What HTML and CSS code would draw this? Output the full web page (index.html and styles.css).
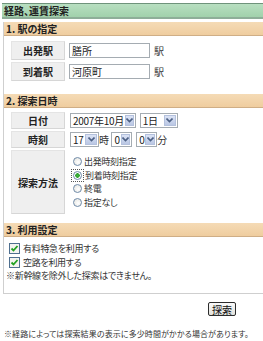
FILE: index.html
```html
<!DOCTYPE html>
<html lang="ja">
<head>
<meta charset="UTF-8">
<title>経路、運賃探索</title>
<link rel="stylesheet" href="styles.css">
</head>
<body>

<div class="title">経路、運賃探索</div>

<div class="panel">
    <div class="sec-head">1. 駅の指定</div>
    <table class="form-tbl tbl-station">
        <tr>
            <th>出発駅</th>
            <td><input type="text" class="txt" value="膳所"><span class="unit">駅</span></td>
        </tr>
        <tr>
            <th>到着駅</th>
            <td><input type="text" class="txt" value="河原町"><span class="unit">駅</span></td>
        </tr>
    </table>

    <div class="sec-head">2. 探索日時</div>
    <table class="form-tbl tbl-date">
        <tr class="row-s">
            <th>日付</th>
            <td>
                <span class="sel sel-ym"><span class="sel-val">2007年10月</span><span class="sel-btn"><svg width="7" height="5" viewBox="0 0 7 5"><path d="M0.5 0.5 L3.5 3.5 L6.5 0.5" fill="none" stroke="#4d6185" stroke-width="1.6"/></svg></span></span>
                <span class="sel sel-day"><span class="sel-val">1日</span><span class="sel-btn"><svg width="7" height="5" viewBox="0 0 7 5"><path d="M0.5 0.5 L3.5 3.5 L6.5 0.5" fill="none" stroke="#4d6185" stroke-width="1.6"/></svg></span></span>
            </td>
        </tr>
        <tr class="row-s">
            <th>時刻</th>
            <td>
                <span class="sel sel-hour"><span class="sel-val">17</span><span class="sel-btn"><svg width="7" height="5" viewBox="0 0 7 5"><path d="M0.5 0.5 L3.5 3.5 L6.5 0.5" fill="none" stroke="#4d6185" stroke-width="1.6"/></svg></span></span><span class="unit-t">時</span>
                <span class="sel sel-min"><span class="sel-val">0</span><span class="sel-btn"><svg width="7" height="5" viewBox="0 0 7 5"><path d="M0.5 0.5 L3.5 3.5 L6.5 0.5" fill="none" stroke="#4d6185" stroke-width="1.6"/></svg></span></span>
                <span class="sel sel-min2"><span class="sel-val">0</span><span class="sel-btn"><svg width="7" height="5" viewBox="0 0 7 5"><path d="M0.5 0.5 L3.5 3.5 L6.5 0.5" fill="none" stroke="#4d6185" stroke-width="1.6"/></svg></span></span><span class="unit-t">分</span>
            </td>
        </tr>
        <tr class="row-l">
            <th>探索方法</th>
            <td class="radios">
                <div class="radio-row"><span class="radio"></span>出発時刻指定</div>
                <div class="radio-row"><span class="focus"><span class="radio on"></span></span>到着時刻指定</div>
                <div class="radio-row"><span class="radio"></span>終電</div>
                <div class="radio-row"><span class="radio"></span>指定なし</div>
            </td>
        </tr>
    </table>

    <div class="sec-head">3. 利用設定</div>
    <div class="opts">
        <div class="chk-row"><span class="chk"><svg width="9" height="9" viewBox="0 0 9 9"><path d="M1.5 4.5 L3.5 6.5 L7.5 2" fill="none" stroke="#21a121" stroke-width="1.8"/></svg></span>有料特急を利用する</div>
        <div class="chk-row"><span class="chk"><svg width="9" height="9" viewBox="0 0 9 9"><path d="M1.5 4.5 L3.5 6.5 L7.5 2" fill="none" stroke="#21a121" stroke-width="1.8"/></svg></span>空路を利用する</div>
        <div class="note">※新幹線を除外した探索はできません。</div>
    </div>
</div>

<div class="actions"><button type="button" class="btn">探索</button></div>

<p class="foot">※経路によっては探索結果の表示に多少時間がかかる場合があります。</p>

</body>
</html>
```

FILE: styles.css
```css
body {
    margin: 0;
    font-family: "Noto Sans CJK JP", sans-serif;
    font-size: 9px;
    letter-spacing: -0.3px;
    color: #333;
    font-feature-settings: "palt";
    background: #fff;
}

.title {
    margin: 3px 0 0 2px;
    height: 13px;
    line-height: 13px;
    padding-left: 2px;
    background: linear-gradient(#b8dfc1, #a1d1ab);
    border-top: 1px solid #6f937b;
    border-bottom: 2px solid #8eae98;
    font-size: 10px;
    font-weight: bold;
    letter-spacing: 0;
    color: #222;
}

.panel {
    margin: 3px 0 0 3px;
    border-left: 1px solid #cfcfcf;
    border-bottom: 1px solid #cfcfcf;
}

.sec-head {
    height: 13px;
    line-height: 13px;
    padding-left: 2px;
    background: linear-gradient(#f5dbb6, #efcd9f);
    border-bottom: 1px solid #cfae86;
    font-size: 10px;
    font-weight: bold;
    letter-spacing: 0;
    color: #222;
}

.form-tbl {
    border-collapse: separate;
    border-spacing: 2px;
    margin-left: 5px;
}

.form-tbl th {
    width: 52px;
    padding: 0;
    background: #efefef;
    border: 1px solid #d6d6d6;
    border-top-color: #e4e4e4;
    border-left-color: #e4e4e4;
    font-size: 10px;
    font-weight: bold;
    letter-spacing: 0;
    color: #222;
    text-align: center;
}

.form-tbl td {
    padding: 0 0 0 2px;
    white-space: nowrap;
}

.tbl-station {
    margin-top: 3px;
    margin-bottom: 11px;
}

.tbl-station tr {
    height: 19px;
}

.txt {
    box-sizing: border-box;
    width: 81px;
    height: 15px;
    padding: 0 2px;
    border: 1px solid #a5acb2;
    font-family: inherit;
    font-size: 10px;
    color: #222;
    vertical-align: middle;
}

.unit {
    margin-left: 4px;
    vertical-align: middle;
    font-size: 10px;
}

.tbl-date {
    margin-top: 2px;
    margin-bottom: 7px;
}

.row-s {
    height: 17px;
}

.row-l {
    height: 64px;
}

.sel {
    box-sizing: border-box;
    display: inline-flex;
    align-items: stretch;
    height: 15px;
    border: 1px solid #a5acb2;
    background: #fff;
    vertical-align: middle;
}

.sel-val {
    flex: 1;
    padding-left: 2px;
    line-height: 13px;
    font-size: 10px;
    color: #222;
}

.sel-btn {
    display: flex;
    align-items: center;
    justify-content: center;
    width: 12px;
    margin: 1px;
    background: linear-gradient(#dbe3f5, #bac7e4);
    border: 1px solid #b4c1dd;
    box-sizing: border-box;
}

.sel-ym {
    width: 66px;
    margin-left: 1px;
}

.sel-day {
    width: 38px;
    margin-left: 2px;
}

.sel-hour {
    width: 29px;
    margin-left: 1px;
}

.sel-min {
    width: 21px;
    margin-left: 1px;
}

.sel-min2 {
    width: 21px;
    margin-left: 2px;
}

.unit-t {
    vertical-align: middle;
    font-size: 10px;
}

.radios {
    vertical-align: top;
}

.form-tbl td.radios {
    padding: 5px 0 0 6px;
}

.radio-row {
    display: flex;
    align-items: center;
    height: 13.5px;
}

.radio {
    box-sizing: border-box;
    width: 9px;
    height: 9px;
    margin-right: 2px;
    border: 1px solid #6f8aa8;
    border-radius: 50%;
    background: radial-gradient(circle at 60% 60%, #fff, #e2e2dc);
}

.radio.on {
    background: radial-gradient(circle, #3fb83f 0, #2f9d2f 2px, #fff 2.5px);
}

.focus {
    display: flex;
    margin-left: -2px;
    margin-right: 1px;
    padding: 1px;
    border: 1px dotted #555;
}

.focus .radio {
    margin-right: 0;
}

.opts {
    padding: 4px 0 10px 5px;
}

.chk-row {
    display: flex;
    align-items: center;
    height: 14px;
}

.chk {
    box-sizing: border-box;
    display: flex;
    align-items: center;
    justify-content: center;
    width: 11px;
    height: 11px;
    margin-right: 3px;
    border: 1px solid #4f6f8f;
    background: #f4f4f0;
}

.note {
    height: 14px;
    line-height: 14px;
    margin-left: -3px;
}

.actions {
    padding: 8px 27px 0 0;
    text-align: right;
}

.btn {
    box-sizing: border-box;
    width: 28px;
    height: 14px;
    padding: 0;
    border: 1px solid #2c2c2c;
    border-radius: 2px;
    background: linear-gradient(#fafafa, #e2e2dc);
    font-family: inherit;
    font-size: 10px;
    line-height: 11px;
    letter-spacing: 0;
    color: #111;
}

.foot {
    margin: 11px 0 0 4px;
    line-height: 12px;
    font-size: 8px;
    letter-spacing: 0.1px;
    white-space: nowrap;
}
```
